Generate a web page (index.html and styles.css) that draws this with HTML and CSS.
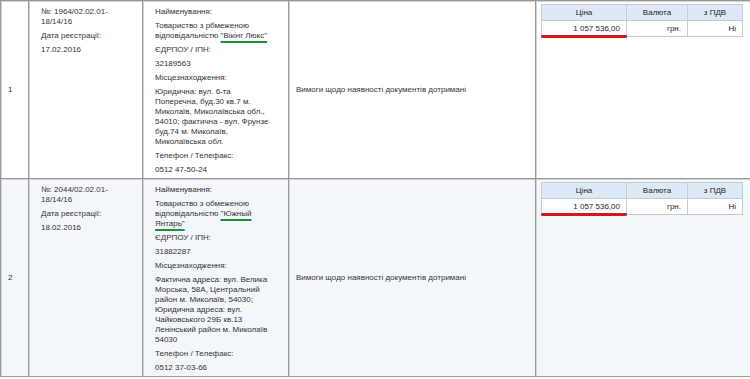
FILE: index.html
```html
<!DOCTYPE html>
<html lang="uk">
<head>
<meta charset="utf-8">
<title>Пропозиції</title>
<link rel="stylesheet" href="styles.css">
</head>
<body>
<table class="grid">
  <colgroup>
    <col class="c-num"><col class="c-reg"><col class="c-org"><col class="c-req"><col class="c-price">
  </colgroup>
  <tr class="row">
    <td class="num">1</td>
    <td class="info">
      <p>№: 1964/02.02.01-<br>18/14/16</p>
      <p>Дата реєстрації:</p>
      <p>17.02.2016</p>
    </td>
    <td class="info org">
      <p>Найменування:</p>
      <p>Товариство з рбмеженою<br>відповідальністю <span class="mark">"Вікінг Люкс"</span></p>
      <p>ЄДРПОУ / ІПН:</p>
      <p>32189563</p>
      <p>Місцезнаходження:</p>
      <p>Юридична: вул. 6-та<br>Поперечна, буд.30 кв.7 м.<br>Миколаїв, Миколаївська обл.,<br>54010; фактична - вул. Фрунзе<br>буд.74 м. Миколаїв,<br>Миколаївська обл.</p>
      <p>Телефон / Телефакс:</p>
      <p>0512 47-50-24</p>
    </td>
    <td class="req">Вимоги щодо наявності документів дотримані</td>
    <td class="price">
      <table class="pt">
        <colgroup><col class="p1"><col class="p2"><col class="p3"></colgroup>
        <tr><th>Ціна</th><th>Валюта</th><th>з ПДВ</th></tr>
        <tr><td class="amount">1 057 536,00</td><td>грн.</td><td>Ні</td></tr>
      </table>
    </td>
  </tr>
  <tr class="row alt">
    <td class="num">2</td>
    <td class="info">
      <p>№: 2044/02.02.01-<br>18/14/16</p>
      <p>Дата реєстрації:</p>
      <p>18.02.2016</p>
    </td>
    <td class="info org">
      <p>Найменування:</p>
      <p>Товариство з обмеженою<br>відповідальністю <span class="mark">"Южный<br>Янтарь"</span></p>
      <p>ЄДРПОУ / ІПН:</p>
      <p>31882287</p>
      <p>Місцезнаходження:</p>
      <p>Фактична адреса: вул. Велика<br>Морська, 58А, Центральний<br>район м. Миколаїв, 54030;<br>Юридична адреса: вул.<br>Чайковського 29Б кв.13<br>Ленінський район м. Миколаїв<br>54030</p>
      <p>Телефон / Телефакс:</p>
      <p>0512 37-03-66</p>
    </td>
    <td class="req">Вимоги щодо наявності документів дотримані</td>
    <td class="price">
      <table class="pt">
        <colgroup><col class="p1"><col class="p2"><col class="p3"></colgroup>
        <tr><th>Ціна</th><th>Валюта</th><th>з ПДВ</th></tr>
        <tr><td class="amount">1 057 536,00</td><td>грн.</td><td>Ні</td></tr>
      </table>
    </td>
  </tr>
</table>
</body>
</html>
```
FILE: styles.css
```css
html, body {
  margin: 0;
  padding: 0;
  background: #ffffff;
}
body {
  font-family: "Liberation Sans", Arial, sans-serif;
  font-size: 8px;
  line-height: 10px;
  color: #333333;
}
.grid {
  width: 750px;
  table-layout: fixed;
  border-collapse: collapse;
}
.c-num { width: 28px; }
.c-reg { width: 114px; }
.c-org { width: 146px; }
.c-req { width: 247px; }
.c-price { width: 215px; }

.grid > tbody > tr > td,
.grid > tr > td {
  border: 1px solid #999999;
  box-shadow: inset 1px 1px 0 #d2d2d2;
}
.row { background: #ffffff; }
.row.alt { background: #f3f6fa; }

.num {
  vertical-align: middle;
  padding: 0 0 0 7px;
}
.info {
  vertical-align: top;
  padding: 6px 6px 3px 12px;
}
.info p {
  margin: 0 0 4px 0;
}
.info p:last-child { margin-bottom: 0; }
.req {
  vertical-align: middle;
  padding: 0 0 0 7px;
}
.price {
  vertical-align: top;
  padding: 3px 0 0 5px;
}
.mark {
  text-decoration: underline;
  text-decoration-color: #17913a;
  text-decoration-thickness: 2px;
  text-underline-offset: 3px;
}

.pt {
  width: 201px;
  table-layout: fixed;
  border-collapse: collapse;
}
.p1 { width: 85px; }
.p2 { width: 61px; }
.p3 { width: 55px; }
.pt th, .pt td {
  border: 1px solid #c3ccd6;
  height: 15px;
  padding: 0 6px;
}
.pt th {
  background: #dde9f6;
  font-weight: normal;
  color: #1e1e1e;
  text-align: center;
}
.pt td {
  background: #ffffff;
  text-align: right;
  color: #1e1e1e;
}
.pt td.amount {
  position: relative;
}
.pt td.amount::after {
  content: "";
  position: absolute;
  left: -1px;
  right: -1px;
  bottom: -2px;
  height: 3px;
  border-radius: 2px;
  background: #d3161b;
}
```
